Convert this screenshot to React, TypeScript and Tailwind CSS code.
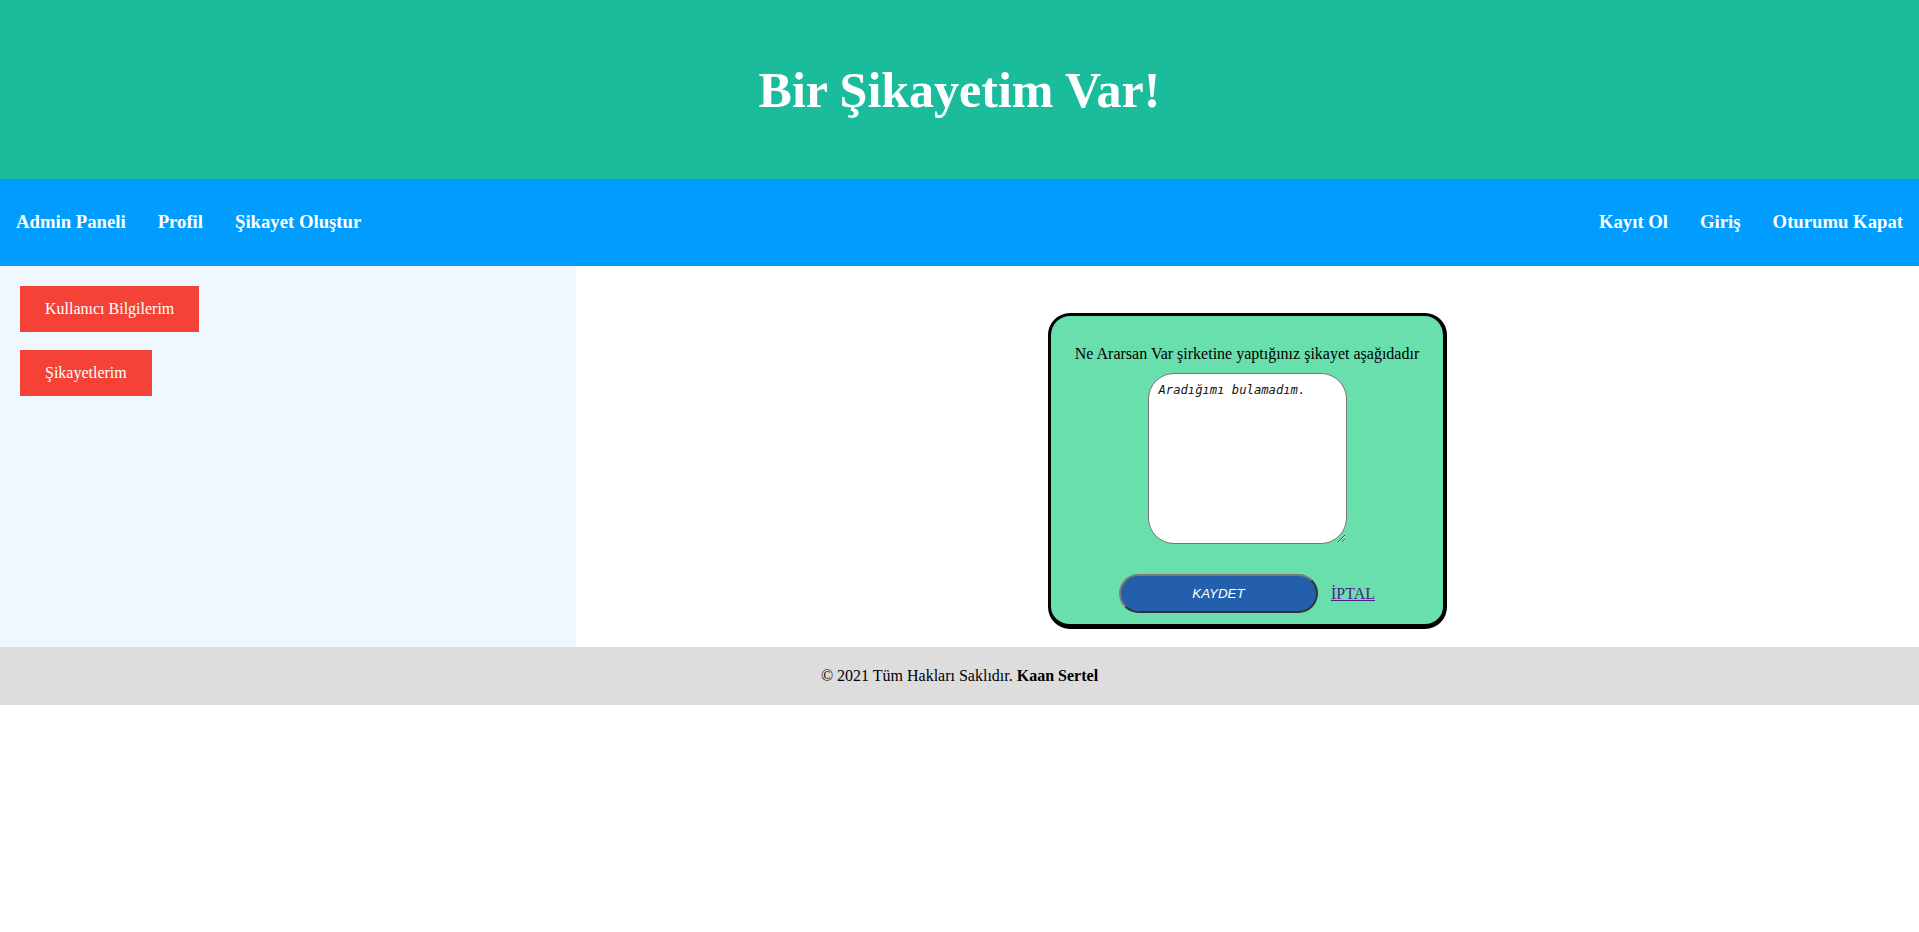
import React from 'react';

const serif = "font-['Liberation_Serif','Times_New_Roman',serif]";

const NavLink: React.FC<{ label: string }> = ({ label }) => (
  <a href="#" className="px-4 text-[18.72px] font-bold text-white no-underline">
    {label}
  </a>
);

const SideButton: React.FC<{ label: string }> = ({ label }) => (
  <button className="flex h-[46px] items-center bg-[#f44336] px-[25px] text-[16px] text-white">
    {label}
  </button>
);

const App: React.FC = () => {
  return (
    <div className={`${serif} w-full bg-white text-black`}>
      {/* header */}
      <header className="flex h-[179px] items-center justify-center bg-[#1abc9c]">
        <h1 className="text-[50px] font-bold leading-none text-white">Bir Şikayetim Var!</h1>
      </header>

      {/* nav */}
      <nav className="flex h-[87px] items-center justify-between bg-[#009dff]">
        <div className="flex items-center">
          <NavLink label="Admin Paneli" />
          <NavLink label="Profil" />
          <NavLink label="Şikayet Oluştur" />
        </div>
        <div className="flex items-center">
          <NavLink label="Kayıt Ol" />
          <NavLink label="Giriş" />
          <NavLink label="Oturumu Kapat" />
        </div>
      </nav>

      {/* content */}
      <main className="flex h-[381px]">
        <aside className="flex w-[576px] flex-col items-start gap-[18px] bg-[#eff7ff] px-5 pt-5">
          <SideButton label="Kullanıcı Bilgilerim" />
          <SideButton label="Şikayetlerim" />
        </aside>

        <section className="flex flex-1 justify-center pt-[47px]">
          <div className="flex h-[316px] w-[399px] flex-col items-center rounded-[22px] border-[3px] border-b-[5px] border-r-[4px] border-black bg-[#68dfac] pt-[28px]">
            <p className="text-[16px] leading-[19px]">
              Ne Ararsan Var şirketine yaptığınız şikayet aşağıdadır
            </p>
            <textarea
              defaultValue="Aradığımı bulamadım."
              className="mt-[10px] h-[171px] w-[199px] resize rounded-[26px] border border-[#767676] bg-white px-[10px] py-[8px] font-['DejaVu_Sans_Mono',monospace] text-[12.2px] italic leading-[16px] text-[#111]"
            />
            <div className="mt-[30px] flex items-center gap-[13px]">
              <button className="h-[39px] w-[199px] rounded-full border-2 border-t-[#7a7a7a] border-l-[#7a7a7a] border-b-[#333] border-r-[#333] bg-[#245fab] font-['Liberation_Sans',Arial,sans-serif] text-[13.33px] italic text-white">
                KAYDET
              </button>
              <a href="#" className="text-[16px] text-[#551a8b] underline">
                İPTAL
              </a>
            </div>
          </div>
        </section>
      </main>

      {/* footer */}
      <footer className="flex h-[58px] items-center justify-center bg-[#dddddd] text-[16px]">
        <span>
          © 2021 Tüm Hakları Saklıdır. <b>Kaan Sertel</b>
        </span>
      </footer>
    </div>
  );
};

export default App;
